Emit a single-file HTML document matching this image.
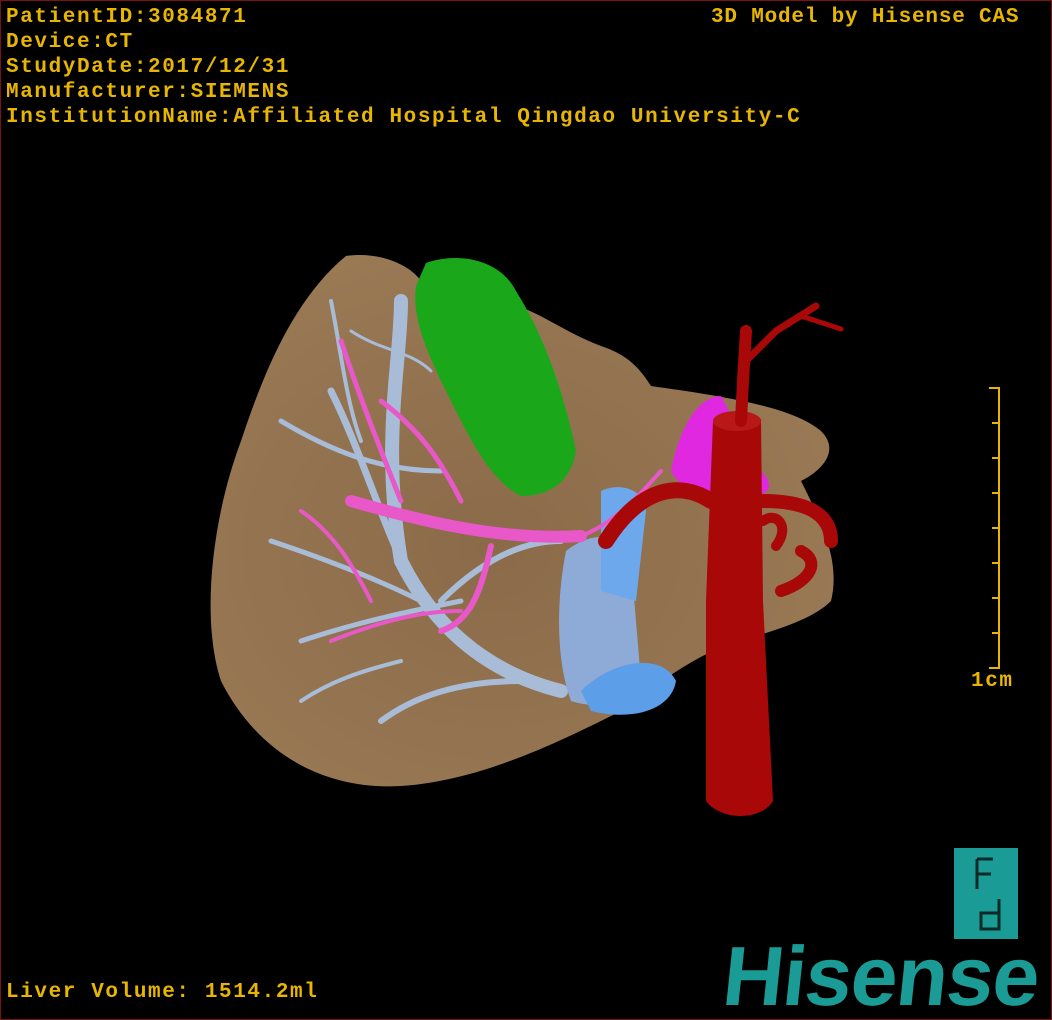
<!DOCTYPE html>
<html><head><meta charset="utf-8"><style>
html,body{margin:0;padding:0;background:#000}
#w{position:relative;width:1050px;height:1018px;border:1px solid #7a1414;overflow:hidden;background:#000}
.t{position:absolute;color:#e8b600;font-family:"Liberation Mono","DejaVu Sans Mono",monospace;font-size:21px;line-height:25px;white-space:pre;letter-spacing:1.6px;font-weight:bold}
svg{position:absolute;left:0;top:0}
</style></head><body><div id="w">
<svg width="1050" height="1018" viewBox="0 0 1050 1018">
<defs><radialGradient id="lv" cx="0.45" cy="0.55" r="0.6"><stop offset="0" stop-color="#8a6a48"/><stop offset="1" stop-color="#9a7a55"/></radialGradient></defs>
<path d="M345 255 C380 250 410 265 420 280 L500 300 C540 310 560 330 600 345 C630 355 640 370 650 385 C720 395 790 405 820 430 C840 450 820 470 800 480 C820 520 840 560 830 600 C810 620 770 630 740 640 C700 650 660 680 620 710 C560 740 480 780 400 785 C310 790 250 740 220 680 C200 620 210 520 240 440 C260 380 290 300 345 255 Z" fill="url(#lv)"/>
<path d="M425 262 C460 250 500 260 515 290 C540 330 560 380 575 450 C570 480 550 495 520 495 C490 480 470 440 450 400 C430 360 410 320 415 285 Z" fill="#1aa81a"/>
<g stroke="#a8bcd8" fill="none" stroke-linecap="round">
<path d="M400 300 C400 360 380 440 400 560 C430 620 480 670 560 690" stroke-width="14"/>
<path d="M330 390 C360 450 380 520 410 580" stroke-width="7"/>
<path d="M280 420 C330 450 380 470 440 470" stroke-width="5"/>
<path d="M270 540 C330 560 380 580 420 600" stroke-width="5"/>
<path d="M300 640 C360 620 410 610 460 600" stroke-width="5"/>
<path d="M380 720 C420 690 470 680 520 680" stroke-width="6"/>
<path d="M330 300 C340 350 345 400 360 440" stroke-width="4"/>
<path d="M440 600 C480 560 520 540 560 540" stroke-width="6"/>
<path d="M300 700 C330 680 360 670 400 660" stroke-width="4"/>
<path d="M350 330 C380 350 410 350 430 370" stroke-width="3"/>
</g>
<path d="M565 550 C590 530 620 530 630 560 L640 680 C640 700 600 710 570 700 C555 660 555 600 565 550 Z" fill="#8eaad6"/>
<path d="M600 490 C620 480 645 490 645 510 L635 600 L600 590 Z" fill="#6ea8ec"/>
<path d="M580 690 C610 660 660 650 675 680 C670 710 630 720 590 710 Z" fill="#5c9ee8"/>
<g stroke="#e858c8" fill="none" stroke-linecap="round">
<path d="M350 500 C420 520 500 540 580 535" stroke-width="12"/>
<path d="M340 340 C360 400 380 450 400 500" stroke-width="5"/>
<path d="M380 400 C420 430 440 460 460 500" stroke-width="5"/>
<path d="M300 510 C330 530 350 560 370 600" stroke-width="4"/>
<path d="M490 545 C480 590 470 620 440 630" stroke-width="6"/>
<path d="M330 640 C380 620 420 610 460 610" stroke-width="4"/>
<path d="M580 535 C620 520 650 480 660 470" stroke-width="4"/>
</g>
<path d="M670 470 C680 420 700 395 720 395 L760 470 C780 490 760 500 730 495 C700 490 680 490 670 470 Z" fill="#e028e0"/>
<g fill="#a80808" stroke="#a80808" stroke-linecap="round">
<path d="M712 420 L760 418 L762 600 L772 800 C760 820 720 820 705 800 L705 600 Z" stroke="none"/>
<ellipse cx="736" cy="420" rx="24" ry="10" fill="#b81818" stroke="none"/>
<path d="M740 420 L742 380 L745 330" stroke-width="12" fill="none"/>
<path d="M745 360 L775 330 L815 305" stroke-width="7" fill="none"/>
<path d="M800 315 L840 328" stroke-width="5" fill="none"/>
<path d="M710 500 C680 480 640 485 605 540" stroke-width="16" fill="none"/>
<path d="M762 500 C800 500 830 510 830 540" stroke-width="14" fill="none"/>
<path d="M800 550 C820 560 810 580 780 590" stroke-width="12" fill="none"/>
<path d="M762 520 C775 510 790 525 775 545" stroke-width="10" fill="none"/>
</g>
<g stroke="#e8b600" stroke-width="2" fill="none">
<path d="M988 387 L998 387 L998 667 L988 667"/>
<path d="M991 422 H998 M991 457 H998 M991 492 H998 M991 527 H998 M991 562 H998 M991 597 H998 M991 632 H998"/>
</g>
<rect x="953" y="847" width="64" height="91" fill="#1a9b95"/>
<path d="M976 858 V888 M976 858 H992 M976 873 H990" stroke="#0d2a28" stroke-width="3" fill="none"/>
<path d="M998 898 V928 H980 V912 H998" stroke="#0d2a28" stroke-width="3" fill="none"/>
</svg>
<div class="t" style="left:5px;top:4px">PatientID:3084871
Device:CT
StudyDate:2017/12/31
Manufacturer:SIEMENS
InstitutionName:Affiliated Hospital Qingdao University-C</div>
<div class="t" style="left:710px;top:4px;letter-spacing:0.8px">3D Model by Hisense CAS</div>
<div class="t" style="left:970px;top:668px">1cm</div>
<div class="t" style="left:5px;top:979px">Liver Volume: 1514.2ml</div>
<div style="position:absolute;left:718px;top:930px;color:#1a9b95;font-family:'Liberation Sans',sans-serif;font-weight:bold;font-size:84px;letter-spacing:-1px;line-height:90px;transform:skewX(-6deg);transform-origin:left bottom">Hisense</div>
</div></body></html>
